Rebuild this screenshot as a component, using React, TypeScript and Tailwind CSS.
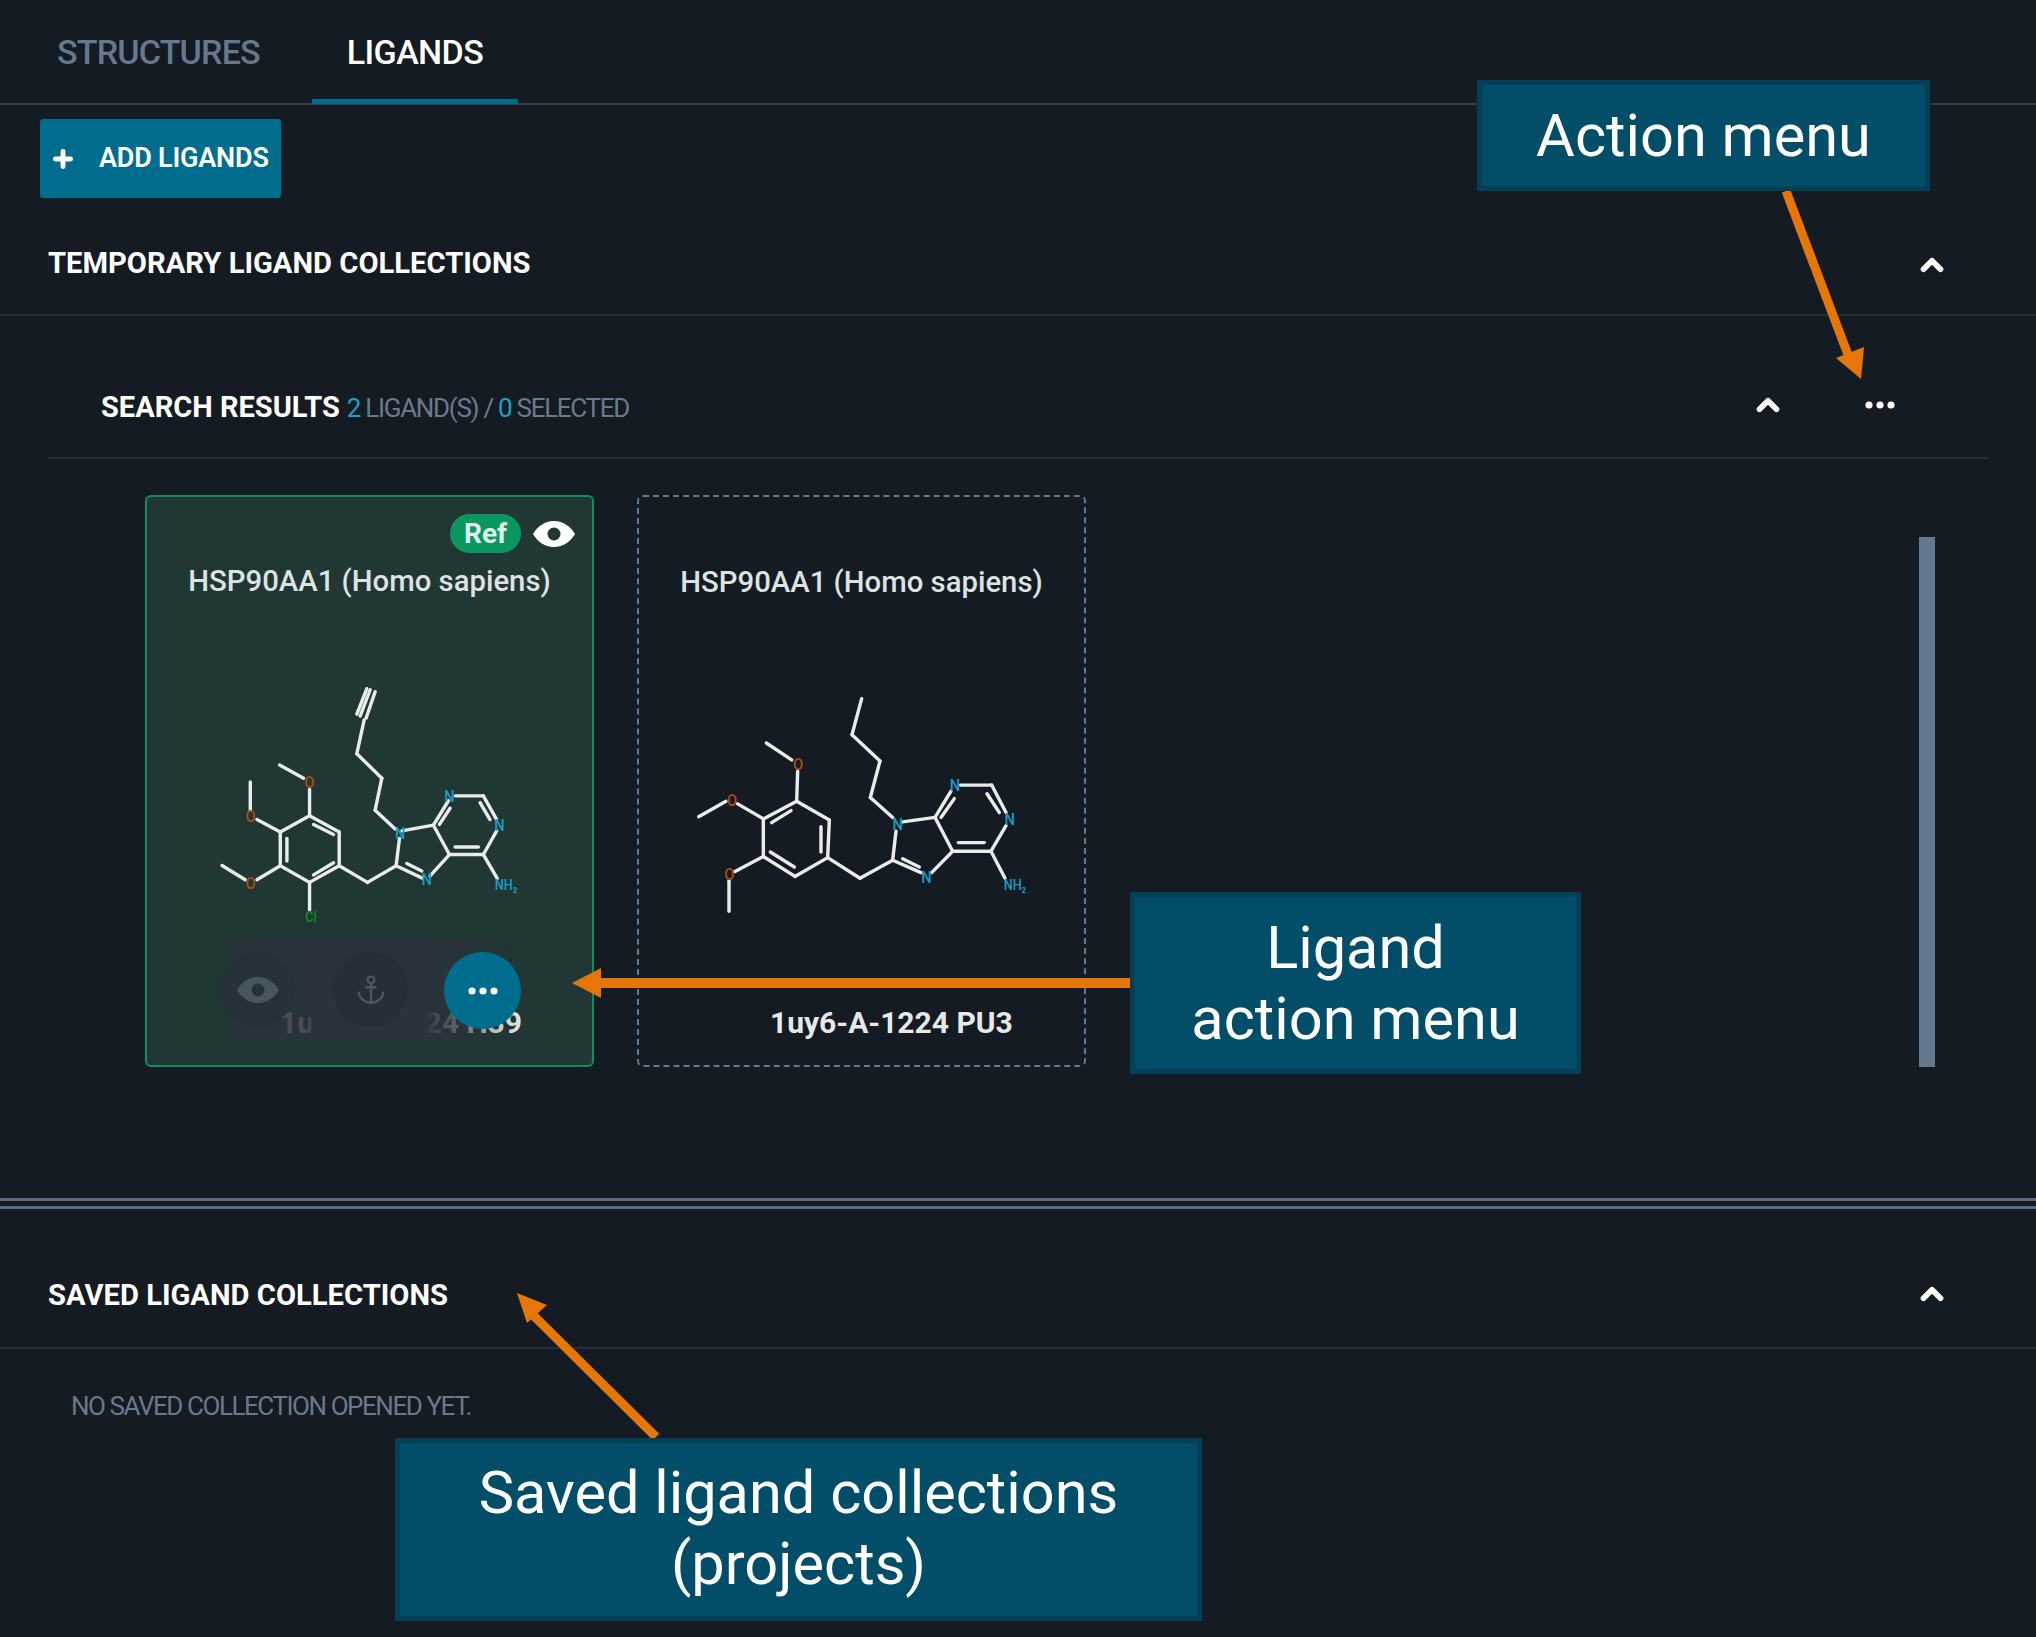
import React from "react";
import { ChevronUp, Plus } from "lucide-react";

const ORANGE = "#e57607";

function Dots({ className }: { className?: string }) {
  return (
    <svg viewBox="0 0 30 8" className={className} fill="currentColor">
      <circle cx="4" cy="4" r="3.6" />
      <circle cx="15" cy="4" r="3.6" />
      <circle cx="26" cy="4" r="3.6" />
    </svg>
  );
}

function Eye({ className }: { className?: string }) {
  return (
    <svg viewBox="0 0 42 26" className={className}>
      <path
        fill="currentColor"
        fillRule="evenodd"
        d="M21 0C11.500 0 4 6 0 13c4 7 11.500 13 21 13s17-6 21-13C38 6 30.500 0 21 0Zm0 6.500a6.500 6.500 0 1 1 0 13 6.500 6.500 0 0 1 0-13Z"
      />
    </svg>
  );
}

function Anchor({ className }: { className?: string }) {
  return (
    <svg viewBox="0 0 30 32" className={className} fill="none" stroke="currentColor" strokeWidth="2.600">
      <circle cx="15" cy="5" r="3.600" />
      <path d="M15 9v21M9 13h12M2 18c0 7 6 11 13 12 7-1 13-5 13-12" />
    </svg>
  );
}

type Bond = [number, number, number, number];
type Atom = { x: number; y: number; t: string; c: string };

// coordinates are in the molecule's own drawing units
function Molecule({ bonds, atoms, viewBox, className }: { bonds: Bond[]; atoms: Atom[]; viewBox: string; className?: string }) {
  return (
    <svg viewBox={viewBox} preserveAspectRatio="none" className={`overflow-visible ${className}`}>
      {bonds.map((b, i) => (
        <line key={i} x1={b[0]} y1={b[1]} x2={b[2]} y2={b[3]} stroke="#e8ecec" strokeWidth="3.4" vectorEffect="non-scaling-stroke" strokeLinecap="round" />
      ))}
      {atoms.map((a, i) => (
        <text key={i} x={a.x} y={a.y} fill={a.c} fontSize={a.t === "N" || a.t === "O" ? 44 : 38} fontWeight={500} fontFamily="Roboto, sans-serif" textAnchor="middle" dominantBaseline="central">
          {a.t}
        </text>
      ))}
    </svg>
  );
}

const BLUE = "#1b9cc4";
const RUST = "#a84a14";

const bondsA: Bond[] = [
  [660, 600, 690, 530], [678, 605, 705, 535], [650, 595, 680, 527],
  [672, 610, 650, 700], [650, 700, 725, 765], [725, 765, 705, 850], [705, 850, 765, 900],
  [785, 905, 880, 890], [880, 890, 925, 825], [898, 888, 930, 845], [945, 812, 1030, 812],
  [1030, 812, 1070, 875], [1020, 830, 1050, 875], [1070, 905, 1030, 968], [1030, 968, 928, 968],
  [1015, 948, 945, 948], [928, 968, 880, 890], [928, 968, 870, 1025], [845, 1030, 768, 998],
  [845, 1012, 800, 992], [768, 998, 778, 925], [768, 998, 682, 1042], [682, 1042, 597, 998],
  [597, 998, 597, 908], [597, 908, 508, 865], [580, 915, 520, 888], [508, 865, 420, 908],
  [420, 908, 420, 998], [440, 925, 440, 985], [420, 998, 508, 1042], [508, 1042, 597, 998],
  [520, 1022, 580, 990], [508, 865, 508, 795], [490, 765, 418, 730], [350, 875, 420, 908],
  [330, 850, 330, 775], [420, 998, 350, 1035], [315, 1035, 245, 997], [508, 1042, 508, 1115],
  [1030, 968, 1072, 1032],
];
const atomsA: Atom[] = [
  { x: 507, y: 775, t: "O", c: RUST }, { x: 331, y: 865, t: "O", c: RUST }, { x: 331, y: 1043, t: "O", c: RUST },
  { x: 512, y: 1132, t: "Cl", c: "#0c8f1c" }, { x: 780, y: 910, t: "N", c: BLUE }, { x: 928, y: 814, t: "N", c: BLUE },
  { x: 1078, y: 890, t: "N", c: BLUE }, { x: 860, y: 1034, t: "N", c: BLUE }, { x: 1098, y: 1047, t: "NH₂", c: BLUE },
];

const bondsB: Bond[] = [
  [692, 552, 663, 648], [663, 648, 747, 718], [747, 718, 718, 815], [718, 815, 785, 868],
  [815, 880, 912, 868], [912, 868, 960, 798], [930, 868, 970, 818], [988, 782, 1082, 782],
  [1082, 782, 1125, 855], [1068, 805, 1105, 855], [1125, 890, 1080, 958], [1080, 958, 965, 958],
  [1060, 935, 982, 935], [965, 958, 912, 868], [965, 958, 902, 1015], [870, 1015, 785, 982],
  [865, 1000, 815, 978], [785, 982, 795, 905], [785, 982, 687, 1030], [687, 1030, 590, 975],
  [590, 975, 595, 875], [570, 960, 570, 893], [595, 875, 497, 825], [497, 825, 397, 872],
  [480, 850, 422, 882], [397, 872, 397, 972], [397, 972, 492, 1025], [492, 1025, 590, 975],
  [418, 960, 490, 1000], [497, 825, 500, 745], [482, 715, 406, 670], [320, 832, 397, 872],
  [285, 825, 203, 866], [397, 972, 312, 1012], [294, 1035, 294, 1118], [1080, 958, 1122, 1030],
];
const atomsB: Atom[] = [
  { x: 501, y: 726, t: "O", c: RUST }, { x: 303, y: 821, t: "O", c: RUST }, { x: 295, y: 1020, t: "O", c: RUST },
  { x: 800, y: 886, t: "N", c: BLUE }, { x: 972, y: 782, t: "N", c: BLUE }, { x: 1136, y: 874, t: "N", c: BLUE },
  { x: 886, y: 1027, t: "N", c: BLUE }, { x: 1152, y: 1048, t: "NH₂", c: BLUE },
];

function Callout({ className, children }: { className: string; children: React.ReactNode }) {
  return (
    <div className={`absolute z-20 flex flex-col items-center justify-center border-[5px] border-[#033f57] bg-[#024e68] text-center font-['Roboto',sans-serif] text-[59.5px] leading-[71px] text-white ${className}`}>
      {children}
    </div>
  );
}

function SectionHeader({ title, className, chevronClass }: { title: string; className: string; chevronClass: string }) {
  return (
    <div className={`flex items-center justify-between border-b-2 border-[#262d38] pl-[48px] pr-[87px] ${className}`}>
      <h2 className="text-[29.2px] font-bold whitespace-nowrap text-white">{title}</h2>
      <ChevronUp className={`h-[34px] w-[34px] text-white ${chevronClass}`} strokeWidth={4} />
    </div>
  );
}

export default function App() {
  return (
    <div className="relative h-[1637px] w-[2036px] overflow-hidden bg-[#141b23] font-['Roboto',sans-serif]">
      {/* tabs */}
      <div className="flex h-[105px] border-b-2 border-[#363c45] pl-[40px]">
        <div className="flex h-full w-[272px] items-start pt-[27px] pl-[17px] text-[34px] font-medium tracking-[-0.8px] text-[#66788c]">
          <span>STRUCTURES</span>
        </div>
        <div className="flex h-[104px] w-[206px] items-start justify-center border-b-[5px] border-[#006d8f] pt-[27px] text-[34px] font-medium tracking-[-0.6px] text-white">
          <span>LIGANDS</span>
        </div>
      </div>

      {/* add ligands */}
      <div className="pt-[14px] pl-[40px]">
        <button className="flex h-[79px] w-[241px] items-center rounded-[3px] bg-[#006d8f] pl-[10px] text-white">
          <Plus className="h-[26px] w-[26px]" strokeWidth={4.500} />
          <span className="ml-[23px] text-[27px] font-semibold tracking-[-0.2px] whitespace-nowrap">ADD LIGANDS</span>
        </button>
      </div>

      {/* temporary collections */}
      <div className="mt-[44px]">
        <SectionHeader title="TEMPORARY LIGAND COLLECTIONS" className="h-[74px] pb-[28px]" chevronClass="translate-y-[1px]" />
      </div>

      <div className="mx-[48px] mt-[52px] flex h-[91px] items-start justify-between border-b-2 border-[#262d38] pr-[91px] pl-[53px]">
        <div className="flex items-baseline gap-[7px] pt-[18px] whitespace-nowrap">
          <span className="text-[29px] font-bold text-white">SEARCH RESULTS</span>
          <span className="text-[26px] tracking-[-1.3px] text-[#6a7a8c]">
            <span className="text-[#19a3c7]">2</span> LIGAND(S) / <span className="text-[#19a3c7]">0</span> SELECTED
          </span>
        </div>
        <div className="flex items-center gap-[80px] pt-[20px]">
          <ChevronUp className="h-[34px] w-[34px] text-white" strokeWidth={4} />
          <Dots className="mr-[2px] h-[8px] w-[30px] text-white" />
        </div>
      </div>

      {/* cards */}
      <div className="flex pt-[36px] pl-[145px]">
        <div className="flex gap-[43px]">
          <div className="relative h-[572px] w-[449px] rounded-[6px] border-2 border-[#0b8f5f] bg-[#203733]">
            <div className="flex items-center justify-end gap-[12px] pt-[17px] pr-[17px]">
              <span className="flex h-[39px] w-[71px] items-center justify-center rounded-full bg-[#0b9560] text-[28px] font-bold text-[#dff3ea]">Ref</span>
              <Eye className="h-[26px] w-[42px] text-white" />
            </div>
            <p className="mt-[7px] text-center text-[29.3px] font-medium whitespace-nowrap text-[#dde2e2]">HSP90AA1 (Homo sapiens)</p>
            <Molecule bonds={bondsA} atoms={atomsA} viewBox="230 520 910 630" className="mt-[82px] ml-[70px] h-[237px] w-[303px]" />
            <p className="absolute top-[503px] left-[133px] text-[30px] font-bold whitespace-nowrap text-[#e8e8e8]">1uy6-A-1224 H39</p>
            <div className="absolute top-[441px] left-[71px] flex h-[103px] w-[304px] items-start bg-[linear-gradient(90deg,#2a323c00_0%,#2a323cd8_8%,#2a323cd8_30%,#2a323c_31%,#2a323c_68%,#2a323ce0_72%,#2a323cb8_80%,#2a323c40_90%,#2a323c00_100%)] pt-[14px] pl-[2px]">
              <div className="flex h-[75px] w-[75px] items-center justify-center rounded-full bg-[#26323a]">
                <Eye className="h-[26px] w-[42px] text-[#47555d]" />
              </div>
              <div className="ml-[38px] flex h-[75px] w-[75px] items-center justify-center rounded-full bg-[#272e38]">
                <Anchor className="h-[30px] w-[28px] text-[#4c565f]" />
              </div>
              <div className="ml-[36px] flex h-[77px] w-[77px] items-center justify-center rounded-full bg-[#006d8f]">
                <Dots className="h-[8px] w-[32px] text-white" />
              </div>
            </div>
          </div>

          <div className="relative h-[572px] w-[449px] rounded-[6px] border-2 border-dashed border-[#66788c]">
            <p className="mt-[64px] text-center text-[29.3px] font-medium whitespace-nowrap text-[#dde2e2]">HSP90AA1 (Homo sapiens)</p>
            <Molecule bonds={bondsB} atoms={atomsB} viewBox="195 545 1005 580" className="mt-[91px] ml-[57px] h-[218px] w-[335px]" />
            <p className="absolute top-[503px] left-[131px] text-[30px] font-bold whitespace-nowrap text-[#e8e8e8]">1uy6-A-1224 PU3</p>
          </div>
        </div>
        <div className="mt-[42px] ml-[833px] h-[530px] w-[16px] bg-[#64788f]" />
      </div>

      {/* divider */}
      <div className="mt-[131px] h-[11px] border-y-[3px] border-[#5c6b80]" />

      {/* saved collections */}
      <div className="mt-[58px]">
        <SectionHeader title="SAVED LIGAND COLLECTIONS" className="h-[82px] pb-[23px]" chevronClass="-translate-y-[2px]" />
      </div>
      <p className="mt-[38px] ml-[71px] text-[26px] tracking-[-1.45px] whitespace-nowrap text-[#6b7889]">NO SAVED COLLECTION OPENED YET.</p>

      {/* annotations */}
      <Callout className="top-[80px] left-[1477px] h-[111px] w-[453px] pt-[1px]">Action menu</Callout>
      <Callout className="top-[892px] left-[1130px] h-[182px] w-[451px] pt-[1px]">
        <span>Ligand</span>
        <span>action menu</span>
      </Callout>
      <Callout className="top-[1438px] left-[395px] h-[183px] w-[807px] pb-[1px]">
        <span>Saved ligand collections</span>
        <span>(projects)</span>
      </Callout>
      <svg className="pointer-events-none absolute inset-0 z-10 h-[1637px] w-[2036px]" viewBox="0 0 2036 1637">
        <path d="M1786 191 L1850 360" stroke={ORANGE} strokeWidth="9" />
        <polygon points="1861,379 1836,358 1864,347" fill={ORANGE} />
        <path d="M1130 983 H598" stroke={ORANGE} strokeWidth="10" />
        <polygon points="572,983 601,968 601,998" fill={ORANGE} />
        <path d="M656 1437 L534 1316" stroke={ORANGE} strokeWidth="9" />
        <polygon points="517,1293 547,1305 527,1323" fill={ORANGE} />
      </svg>
    </div>
  );
}
